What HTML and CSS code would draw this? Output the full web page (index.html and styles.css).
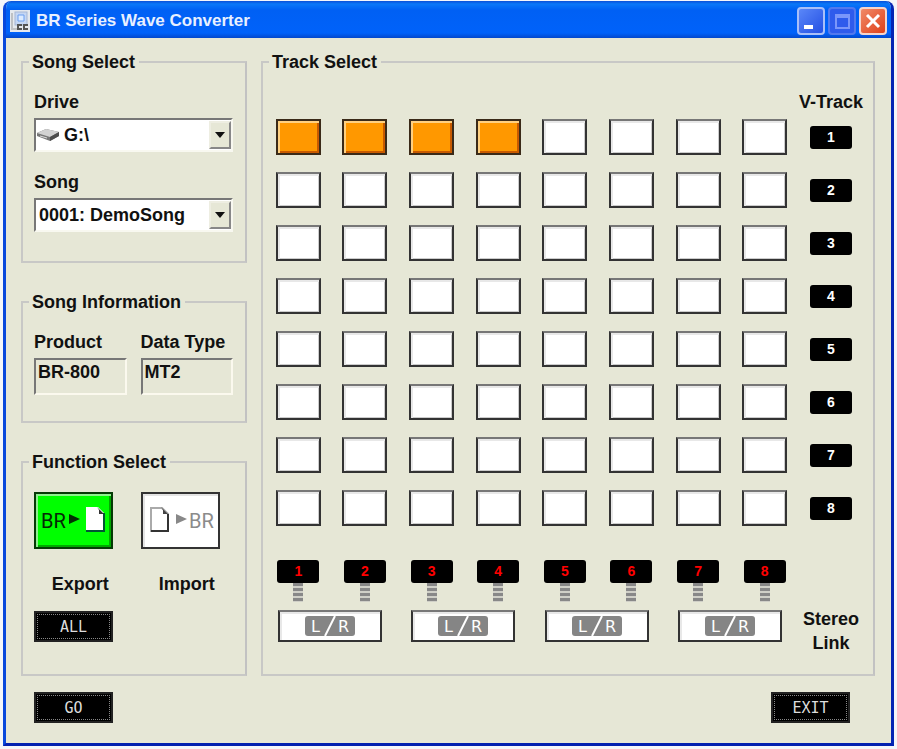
FILE: index.html
```html
<!DOCTYPE html>
<html lang="en">
<head>
    <meta charset="utf-8">
    <title>BR Series Wave Converter</title>
    <link rel="stylesheet" href="styles.css">
</head>
<body>
    <div class="window">
        <!-- Title bar -->
        <header class="titlebar">
            <svg class="app-icon" width="20" height="22" viewBox="0 0 20 22">
                <rect x="0" y="0" width="20" height="22" fill="#e4e8ee"/>
                <rect x="5" y="2" width="12" height="13" fill="#c4d6f4" stroke="#a5b6d4"/>
                <path d="M8 5h6v6H8z" fill="#dcebff" stroke="#6a9ef0"/>
                <path d="M2 3v15M1 19h6" stroke="#999"/>
                <path d="M12 15H8v4h4M18 15h-4v4h4" fill="none" stroke="#555" stroke-width="2"/>
            </svg>
            <h1 class="title">BR Series Wave Converter</h1>
            <div class="window-buttons">
                <button type="button" class="win-btn" aria-label="Minimize">
                    <svg width="24" height="24" viewBox="0 0 24 24"><rect x="5" y="16" width="9" height="4" fill="#fff"/></svg>
                </button>
                <button type="button" class="win-btn win-btn-off" aria-label="Maximize" disabled>
                    <svg width="24" height="24" viewBox="0 0 24 24"><path d="M6 6h13v13H6zM6 8h13" fill="none" stroke="#7b96fa" stroke-width="2"/></svg>
                </button>
                <button type="button" class="win-btn win-btn-close" aria-label="Close">
                    <svg width="24" height="24" viewBox="0 0 24 24"><path d="M6 6l12 12M18 6L6 18" stroke="#fff" stroke-width="3"/></svg>
                </button>
            </div>
        </header>

        <main class="panels">
            <div class="side">
                <!-- Song selection -->
                <fieldset class="group song-select">
                    <legend>Song Select</legend>
                    <label for="drive">Drive</label>
                    <div class="combo">
                        <select id="drive" class="with-icon">
                            <option>G:\</option>
                        </select>
                        <svg class="drive-icon" width="22" height="14" viewBox="0 0 22 14">
                            <path d="M0 5L9 1l13 3v4l-9 5L0 8z" fill="#777"/>
                            <path d="M0 5L9 1l13 3-9 5z" fill="#d2d2d2"/>
                            <path d="M13 9l9-5v4l-9 5z" fill="#4d4d4d"/>
                            <path d="M3 8l7 2" stroke="#ddd"/>
                        </svg>
                        <span class="arrow"></span>
                    </div>
                    <label for="song">Song</label>
                    <div class="combo">
                        <select id="song">
                            <option>0001: DemoSong</option>
                        </select>
                        <span class="arrow"></span>
                    </div>
                </fieldset>

                <!-- Song information -->
                <fieldset class="group song-info">
                    <legend>Song Information</legend>
                    <div class="two-cols">
                        <div>
                            <label for="product">Product</label>
                            <input id="product" type="text" value="BR-800" readonly>
                        </div>
                        <div>
                            <label for="type">Data Type</label>
                            <input id="type" type="text" value="MT2" readonly>
                        </div>
                    </div>
                </fieldset>

                <!-- Export / import -->
                <fieldset class="group function-select">
                    <legend>Function Select</legend>
                    <div class="two-cols">
                        <div>
                            <button type="button" id="export" class="function-btn active" aria-labelledby="export-label">
                                <svg width="71" height="49" viewBox="0 0 71 49">
                                    <text x="3" y="32" class="br-text" fill="#062806">BR</text>
                                    <path d="M31 18l11 5-11 5z" fill="#033003"/>
                                    <path d="M48 11h12l6 6v18H48z" fill="#fff"/>
                                    <path d="M66 17v18H48" fill="none" stroke="#053" stroke-width="2"/>
                                    <path d="M59 11l7 7h-5v-4z" fill="#333"/>
                                </svg>
                            </button>
                            <span id="export-label" class="function-label">Export</span>
                        </div>
                        <div>
                            <button type="button" id="import" class="function-btn" aria-labelledby="import-label">
                                <svg width="71" height="49" viewBox="0 0 71 49">
                                    <path d="M6 35V12h11l6 6v17z" fill="#fff" stroke="#aaa" stroke-width="2"/>
                                    <path d="M23 18v17H6" fill="none" stroke="#333" stroke-width="2"/>
                                    <path d="M16 11l7 7h-5v-4z" fill="#444"/>
                                    <path d="M31 18l11 5-11 5z" fill="#888"/>
                                    <text x="44" y="32" class="br-text" fill="#8b8b8b">BR</text>
                                </svg>
                            </button>
                            <span id="import-label" class="function-label">Import</span>
                        </div>
                    </div>
                    <button type="button" class="black-btn">ALL</button>
                </fieldset>
            </div>

            <!-- Track matrix, rows are filled in by script.js -->
            <fieldset class="group track-select">
                <legend>Track Select</legend>
                <div class="track-row track-head"><span class="row-title">V-Track</span></div>
                <div class="tracks" id="tracks"></div>
                <div class="track-row track-numbers" id="numbers"></div>
                <div class="track-row links" id="links">
                    <span class="row-title">Stereo<br>Link</span>
                </div>
            </fieldset>
        </main>

        <footer class="actions">
            <button type="button" class="black-btn">GO</button>
            <button type="button" class="black-btn">EXIT</button>
        </footer>
    </div>
    <script src="script.js"></script>
</body>
</html>
```
FILE: styles.css
```css
* {
    box-sizing: border-box;
}
body {
    margin: 0;
    padding: 1px 3px 2px;
    background: #f4f6fa;
    font-family: "Liberation Sans", Arial, sans-serif;
    font-size: 18px;
    font-weight: bold;
    line-height: 20px;
    color: #111;
}
button, input, select {
    font: inherit;
    color: inherit;
    margin: 0;
    padding: 0;
    border-radius: 0;
}
.window {
    border: 3px solid #0848dc;
    border-top: 0;
    border-right-color: #0425b4;
    border-bottom-color: #0220b0;
    border-radius: 8px 8px 0 0;
    background: #e6e7d6;
    overflow: hidden;
}

/* Title bar */
.titlebar {
    display: flex;
    align-items: center;
    height: 37px;
    padding: 2px 4px 0 4px;
    background: linear-gradient(#0a50d8, #0a78f8 3px, #0060f4 9px, #0062fa 32px, #0348cc);
}
.title {
    flex: 1;
    margin: 0 0 0 6px;
    font-size: 17px;
    font-weight: bold;
    color: #e8f0ff;
}
.window-buttons {
    display: flex;
    gap: 3px;
}
.win-btn {
    width: 28px;
    height: 28px;
    border: 2px solid #a9bff8;
    border-radius: 4px;
    background: linear-gradient(135deg, #5a87f8, #2450e4);
}
.win-btn svg {
    display: block;
}
.win-btn-off {
    border-color: #5279ee;
    background: #2f5bec;
}
.win-btn-close {
    border-color: #f4d5cd;
    background: linear-gradient(135deg, #f08a68, #e0401a);
}

/* Panels */
.panels {
    display: grid;
    grid-template-columns: 226px 1fr;
    gap: 14px;
    padding: 12px 16px 0 15px;
}
.side {
    display: flex;
    flex-direction: column;
    gap: 27px;
}
.group {
    min-width: 0;
    margin: 0;
    border: 2px solid #c8c8c6;
    border-right-color: #c2c2c2;
    padding: 18px 12px 0 11px;
}
.group legend {
    margin-left: -5px;
    padding: 0 4px 0 3px;
    line-height: 24px;
}
label {
    display: block;
    margin-bottom: 6px;
}
.song-select {
    padding-bottom: 29px;
}
.song-info {
    padding-bottom: 26px;
}
.function-select {
    padding-bottom: 32px;
}

/* Drop-downs */
.combo {
    display: grid;
    align-items: center;
}
.combo + label {
    margin-top: 20px;
}
.combo > * {
    grid-area: 1 / 1;
}
.combo select {
    appearance: none;
    width: 100%;
    height: 34px;
    padding-left: 3px;
    border: 2px solid #777;
    border-right-color: #f8f8f0;
    border-bottom-color: #f8f8f0;
    background: #fff;
}
.combo select.with-icon {
    padding-left: 28px;
}
.drive-icon {
    margin-left: 3px;
    pointer-events: none;
}
.arrow {
    display: grid;
    place-items: center;
    justify-self: end;
    width: 22px;
    height: 28px;
    margin-right: 2px;
    border: 2px solid #eeeee2;
    border-right-color: #888;
    border-bottom-color: #888;
    background: #e6e7d6;
    pointer-events: none;
}
.arrow::before {
    content: "";
    border: 5px solid transparent;
    border-top: 6px solid #111;
    border-bottom: 0;
}

.two-cols {
    display: grid;
    grid-template-columns: 1fr 1fr;
    gap: 14px;
}
.two-cols label {
    white-space: nowrap;
}
.two-cols input {
    display: block;
    width: 100%;
    height: 37px;
    padding: 0 2px 8px;
    border: 2px solid #777;
    border-right-color: #fbf9ee;
    border-bottom-color: #fbf9ee;
    background: #e6e7d6;
}

/* Function buttons */
.function-btn {
    display: grid;
    place-items: center;
    width: 79px;
    height: 57px;
    border: 2px solid #333;
    background: #fff;
    box-shadow: inset 2px 2px #e4e4e4;
}
.function-btn.active {
    background: #0f0;
    border-color: #053a05;
    box-shadow: inset 2px 2px #90f090, inset -2px -2px #00a800;
}
.br-text {
    font-family: Roboto, sans-serif;
    font-size: 20px;
    font-weight: normal;
}
.function-label {
    display: block;
    margin: 25px 0 17px;
    text-align: center;
}
.black-btn {
    display: block;
    width: 79px;
    height: 31px;
    border: 2px solid #222;
    background: #000;
    outline: 1px dotted #888;
    outline-offset: -4px;
    color: #ddd;
    font-family: "DejaVu Sans Mono", monospace;
    font-size: 15px;
    font-weight: normal;
}

/* Track matrix */
.track-select {
    padding: 18px 9px 13px 2px;
}
.track-select legend {
    margin-left: 4px;
}
.track-row {
    display: grid;
    grid-template-columns: repeat(8, 1fr) 66px;
    place-items: center;
}
.row-title {
    grid-column: 9;
    text-align: center;
    white-space: nowrap;
}
.tracks {
    display: grid;
    gap: 17px;
    margin: 7px 0 34px;
}
.track {
    width: 45px;
    height: 36px;
    border: 2px solid #333;
    border-top-color: #777;
    background: #fff;
    box-shadow: inset 2px 2px #e8e8e8, inset -1px -1px #ccc;
}
.track[aria-pressed="true"] {
    border-color: #3a2a18;
    background: #ff9800;
    box-shadow: inset 2px 2px #ffd080, inset -2px -2px #c85a00;
}
.badge {
    width: 42px;
    height: 23px;
    border-radius: 3px;
    background: #000;
    color: #fff;
    font-size: 14px;
    line-height: 23px;
    text-align: center;
}
.track-number {
    display: grid;
    justify-items: center;
}
.track-number .badge {
    color: #f00;
}
.stem {
    width: 10px;
    height: 19px;
    background: repeating-linear-gradient(#888 0 3px, #d0d0c8 3px 5px);
}
.links {
    align-items: start;
    margin-top: 5px;
}
.links .row-title {
    line-height: 24px;
}
.link-btn {
    grid-column: span 2;
    justify-self: start;
    display: grid;
    place-items: center;
    width: 104px;
    height: 32px;
    margin: 3px 0 0 13px;
    border: 2px solid #333;
    border-top-color: #777;
    background: #fff;
    box-shadow: inset 2px 2px #e8e8e8;
}
.lr-text {
    font-family: "DejaVu Sans", sans-serif;
    font-size: 16px;
    font-weight: normal;
}

.actions {
    display: flex;
    justify-content: space-between;
    padding: 16px 41px 20px 28px;
}
```
FILE: script.js
```javascript
var TRACKS = 8;
var tracks = document.getElementById("tracks");
var numbers = document.getElementById("numbers");
var links = document.getElementById("links");

// One row of toggle buttons for each V-Track
for (var v = 1; v <= TRACKS; v++) {
    var row = document.createElement("div");
    row.className = "track-row";
    for (var t = 1; t <= TRACKS; t++) {
        var btn = document.createElement("button");
        btn.type = "button";
        btn.className = "track";
        btn.setAttribute("aria-label", "Track " + t + ", V-Track " + v);
        btn.setAttribute("aria-pressed", v == 1 && t <= 4);
        row.appendChild(btn);
    }
    row.insertAdjacentHTML("beforeend", '<span class="badge">' + v + '</span>');
    tracks.appendChild(row);
}

// Track numbers
for (var n = 1; n <= TRACKS; n++) {
    numbers.insertAdjacentHTML("beforeend",
        '<div class="track-number"><span class="badge">' + n + '</span><span class="stem"></span></div>');
}

// Stereo link buttons, one for each pair of tracks
for (var p = 0; p < TRACKS / 2; p++) {
    links.lastElementChild.insertAdjacentHTML("beforebegin",
        '<button type="button" class="link-btn" aria-label="Stereo link">' +
        '<svg width="50" height="20" viewBox="0 0 50 20">' +
        '<rect width="50" height="20" rx="3" fill="#858585"/>' +
        '<path d="M20 20L30 0" stroke="#fff" stroke-width="2"/>' +
        '<text x="6" y="16" class="lr-text" fill="#fff">L</text>' +
        '<text x="33" y="16" class="lr-text" fill="#fff">R</text>' +
        '</svg></button>');
}

// Toggle a track on click
tracks.addEventListener("click", function (e) {
    if (e.target.className == "track") {
        var on = e.target.getAttribute("aria-pressed") == "true";
        e.target.setAttribute("aria-pressed", !on);
    }
});
```
